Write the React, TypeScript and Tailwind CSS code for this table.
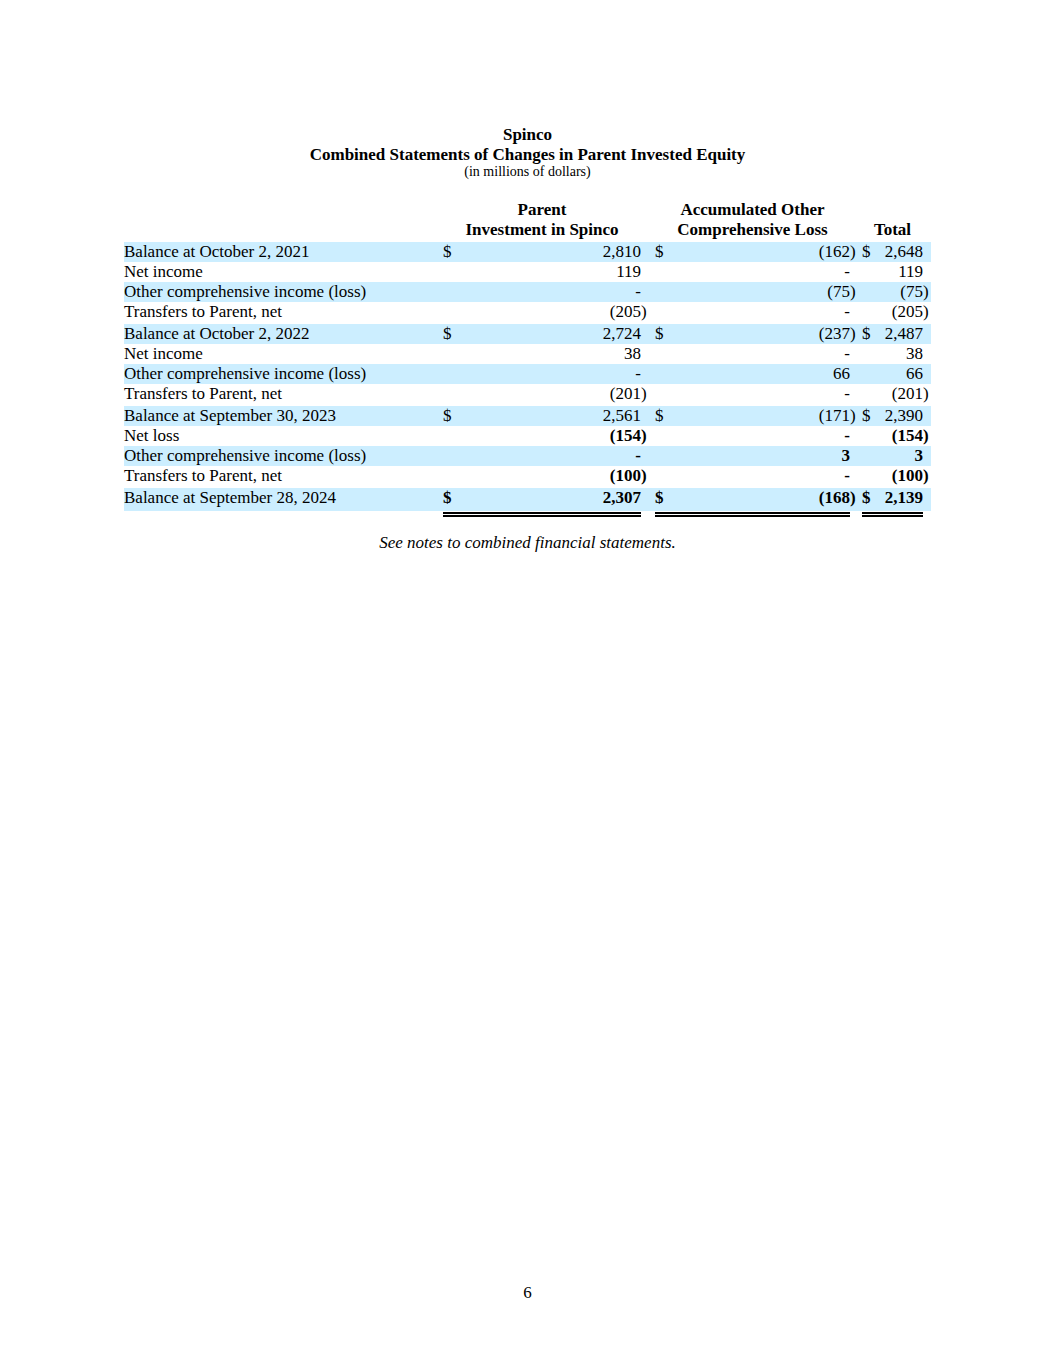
type Row = {
  label: string;
  a: string;
  b: string;
  c: string;
  dollar?: boolean;
  band?: boolean;
  gap?: boolean;
  bold?: boolean;
  last?: boolean;
};

const rows: Row[] = [
  { label: "Balance at October 2, 2021", a: "2,810", b: "(162)", c: "2,648", dollar: true, band: true },
  { label: "Net income", a: "119", b: "-", c: "119" },
  { label: "Other comprehensive income (loss)", a: "-", b: "(75)", c: "(75)", band: true },
  { label: "Transfers to Parent, net", a: "(205)", b: "-", c: "(205)" },
  { label: "Balance at October 2, 2022", a: "2,724", b: "(237)", c: "2,487", dollar: true, band: true, gap: true },
  { label: "Net income", a: "38", b: "-", c: "38" },
  { label: "Other comprehensive income (loss)", a: "-", b: "66", c: "66", band: true },
  { label: "Transfers to Parent, net", a: "(201)", b: "-", c: "(201)" },
  { label: "Balance at September 30, 2023", a: "2,561", b: "(171)", c: "2,390", dollar: true, band: true, gap: true },
  { label: "Net loss", a: "(154)", b: "-", c: "(154)", bold: true },
  { label: "Other comprehensive income (loss)", a: "-", b: "3", c: "3", band: true, bold: true },
  { label: "Transfers to Parent, net", a: "(100)", b: "-", c: "(100)", bold: true },
  { label: "Balance at September 28, 2024", a: "2,307", b: "(168)", c: "2,139", dollar: true, band: true, gap: true, bold: true, last: true },
];

// one money column: "$" on the left, figure on the right, ")" hangs past the figure
function Cell({ value, dollar, bold, width }: { value: string; dollar?: boolean; bold?: boolean; width: string }) {
  const paren = value.endsWith(")");
  const shown = paren ? value.slice(0, -1) : value;
  return (
    <div className={`flex ${width} ${bold ? "font-bold" : ""}`}>
      <div className="flex flex-1 justify-between">
        <span>{dollar ? "$" : ""}</span>
        <span>{shown}</span>
      </div>
      <span className="w-[6px]">{paren ? ")" : ""}</span>
    </div>
  );
}

function Lines() {
  return <div className="h-[5px] border-y-2 border-black" />;
}

export default function App() {
  return (
    <div className="flex h-[1365px] w-full flex-col bg-white text-black font-['Liberation_Serif','Times_New_Roman',serif]">
      <div className="pt-[125px] text-center">
        <div className="text-[17px] font-bold leading-[20px]">Spinco</div>
        <div className="text-[17px] font-bold leading-[20px]">Combined Statements of Changes in Parent Invested Equity</div>
        <div className="text-[14px] leading-[14px]">(in millions of dollars)</div>
      </div>

      <div className="mx-auto mt-[21px] w-[807px] text-[17px] leading-[20px]">
        {/* column heads */}
        <div className="flex items-end pb-[2px] font-bold">
          <div className="w-[319px]" />
          <div className="w-[198px] text-center">
            <div>Parent</div>
            <div>Investment in Spinco</div>
          </div>
          <div className="w-[14px]" />
          <div className="w-[195px] text-center">
            <div>Accumulated Other</div>
            <div>Comprehensive Loss</div>
          </div>
          <div className="w-[12px]" />
          <div className="w-[61px] text-center">Total</div>
        </div>

        {rows.map((r, i) => (
          <div key={i} className={r.gap ? "pt-[2px]" : ""}>
            <div className={`flex h-[20px] items-center ${r.band ? "bg-[#cceeff]" : ""} ${r.last ? "box-content pb-[3px]" : ""}`}>
              <div className="w-[319px] whitespace-nowrap">{r.label}</div>
              <Cell value={r.a} dollar={r.dollar} bold={r.bold} width="w-[204px]" />
              <div className="w-[8px]" />
              <Cell value={r.b} dollar={r.dollar} bold={r.bold} width="w-[201px]" />
              <div className="w-[6px]" />
              <Cell value={r.c} dollar={r.dollar} bold={r.bold} width="w-[67px]" />
            </div>
          </div>
        ))}

        {/* double rule under the closing balance */}
        <div className="mt-[1px] flex">
          <div className="w-[319px]" />
          <div className="w-[198px]">
            <Lines />
          </div>
          <div className="w-[14px]" />
          <div className="w-[195px]">
            <Lines />
          </div>
          <div className="w-[12px]" />
          <div className="w-[61px]">
            <Lines />
          </div>
        </div>
      </div>

      <div className="mt-[16px] text-center text-[17px] italic leading-[20px]">See notes to combined financial statements.</div>

      <div className="mt-auto pb-[62px] text-center text-[17px] leading-[20px]">6</div>
    </div>
  );
}
